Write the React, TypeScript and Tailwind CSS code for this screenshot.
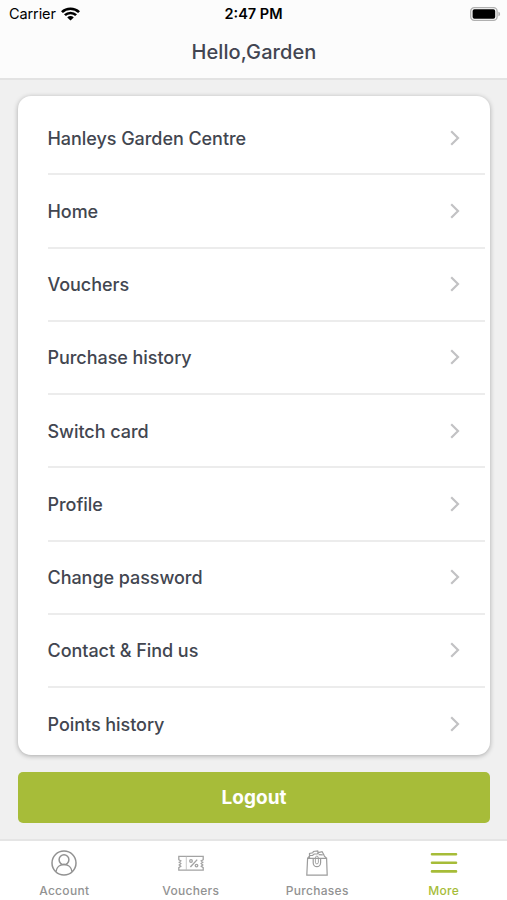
import type { ReactNode } from 'react'

const menuItems = [
  'Hanleys Garden Centre',
  'Home',
  'Vouchers',
  'Purchase history',
  'Switch card',
  'Profile',
  'Change password',
  'Contact & Find us',
  'Points history',
]

function WifiIcon() {
  return (
    <svg width="19" height="14" viewBox="0 0 18 14" preserveAspectRatio="none" fill="none" stroke="#000" strokeWidth="2.5">
      <path d="M0.9 5.1a11.4 11.4 0 0 1 16.2 0" />
      <path d="M3.7 8.1a7.5 7.5 0 0 1 10.6 0" />
      <path d="M9 13.6 5.9 10.4a4.4 4.4 0 0 1 6.2 0Z" fill="#000" stroke="none" />
    </svg>
  )
}

function BatteryIcon() {
  return (
    <svg width="31" height="14" viewBox="0 0 31 14" fill="none">
      <rect x="0.7" y="0.7" width="26.4" height="12.6" rx="3.6" stroke="#b0b0b0" strokeWidth="1.3" />
      <rect x="2.6" y="2.3" width="22.6" height="9.4" rx="1.8" fill="#000" />
      <path d="M28.4 4.7v4.6c1-.3 1.7-1.2 1.7-2.3s-.7-2-1.7-2.3Z" fill="#b0b0b0" />
    </svg>
  )
}

function AccountIcon() {
  return (
    <svg width="26" height="26" viewBox="0 0 26 26" fill="none" stroke="#929292" strokeWidth="1.5">
      <circle cx="13" cy="13" r="12" />
      <circle cx="13" cy="9.7" r="4.9" />
      <path d="M5 21.7c.5-4.3 3.7-7.1 8-7.1s7.5 2.8 8 7.1" />
    </svg>
  )
}

function VoucherIcon() {
  return (
    <svg width="26" height="26" viewBox="0 0 26 26" fill="none" stroke="#a3a3a3" strokeWidth="1.3">
      <path d="M.8 6.3h24.4v3.4l-2 1.2 1.6 1.3-1.6 1.3 1.6 1.4-1.6 1.3 2 1.4v2.6H.8v-2.6l2-1.4-1.6-1.3 1.6-1.4-1.6-1.3 1.6-1.3-2-1.2Z" />
      <path d="M8.3 6.5v13.5" strokeWidth="0.8" stroke="#bbb" />
      <path d="m12.4 17 6.8-7.4" strokeWidth="1.4" />
      <circle cx="13" cy="11" r="1.3" />
      <circle cx="18.5" cy="15.6" r="1.3" />
    </svg>
  )
}

function PurchasesIcon() {
  return (
    <svg width="26" height="26" viewBox="0 0 26 26" fill="none" stroke="#9c9c9c" strokeWidth="1.2">
      <path d="M3.6 8.4h19l.6 16.8H2.8Z" />
      <path d="M3.6 8.4 5.5 6V3.4l3.300-.6.6-1.300 4.300-.5.4 1.700 4-1 1.200 2.100 1.100 2.300 2.200 2.300" />
      <path d="M5.500 5.500h3l1.700-1.500h3l1.400-1.300M14.600 4.600l4.200.3M5.500 6v2.400" />
      <path d="M9.200 8.400v4.300a3.700 4 0 0 0 7.400 0V8.400" />
      <path d="M11.400 8.400v3.800a1.500 1.700 0 0 0 3 0V8.400a1.500 2.400 0 0 0-3 0" strokeWidth="0.9" />
    </svg>
  )
}

function MoreIcon() {
  return (
    <svg width="28" height="26" viewBox="0 0 28 26" fill="none" stroke="#a6bc38" strokeWidth="2.6" strokeLinecap="round">
      <path d="M2 4.2h24M2 12.8h24M2 21.400h24" />
    </svg>
  )
}

interface TabProps {
  label: string
  icon: ReactNode
  active?: boolean
}

function Tab({ label, icon, active }: TabProps) {
  return (
    <button className={`flex flex-1 flex-col items-center pt-[9px] ${active ? 'text-[#a6bc38]' : 'text-[#929292]'}`}>
      {icon}
      <span className="mt-[7px] text-[12px] leading-4 font-medium tracking-[0.3px]">{label}</span>
    </button>
  )
}

export default function App() {
  return (
    <div className="flex h-[900px] w-[507px] flex-col overflow-hidden bg-[#f0f0f0] font-['Inter','Liberation_Sans',sans-serif]">
      <header className="h-20 border-b-2 border-[#e3e3e3] bg-[#fcfcfc]">
        {/* Status bar */}
        <div className="grid h-[27px] grid-cols-3 items-center pr-[6px] pl-[9px] text-[14.5px] text-black">
          <div className="flex items-center gap-[5px]">
            <span className="tracking-[-0.1px]">Carrier</span>
            <WifiIcon />
          </div>
          <span className="pr-[3px] text-center font-semibold">2:47 PM</span>
          <div className="flex justify-end">
            <BatteryIcon />
          </div>
        </div>
        <h1 className="pl-px text-center text-[20px] leading-[51px] font-medium tracking-[0.1px] text-[#424551]">Hello,Garden</h1>
      </header>

      <main className="flex flex-1 flex-col pt-4 pr-[17px] pl-[18px]">
        <ul className="h-[659px] overflow-hidden rounded-[13px] bg-white pt-[6px] shadow-[0_1px_5px_rgba(0,0,0,0.3)]">
          {menuItems.map((item) => (
            <li
              key={item}
              className="mr-[5px] ml-[29.5px] flex h-[73.25px] items-center justify-between border-b-2 border-[#ececec] pr-[25px] last:border-transparent"
            >
              <span className="pt-px text-[18px] font-medium tracking-[-0.05px] text-[#424650]">{item}</span>
              <svg width="10" height="16" viewBox="0 0 10 16" fill="none" stroke="#c2c2c4" strokeWidth="2.2">
                <path d="m1.2 1.2 6.8 6.8-6.8 6.8" />
              </svg>
            </li>
          ))}
        </ul>

        <button className="mt-[17px] h-[51px] rounded-[5px] bg-[#a7bc39] pt-px text-[19px] font-bold text-white">Logout</button>
      </main>

      <nav className="flex h-[61px] border-t-2 border-[#e5e5e5] bg-white pl-px">
        <Tab label="Account" icon={<AccountIcon />} />
        <Tab label="Vouchers" icon={<VoucherIcon />} />
        <Tab label="Purchases" icon={<PurchasesIcon />} />
        <Tab label="More" icon={<MoreIcon />} active />
      </nav>
    </div>
  )
}
